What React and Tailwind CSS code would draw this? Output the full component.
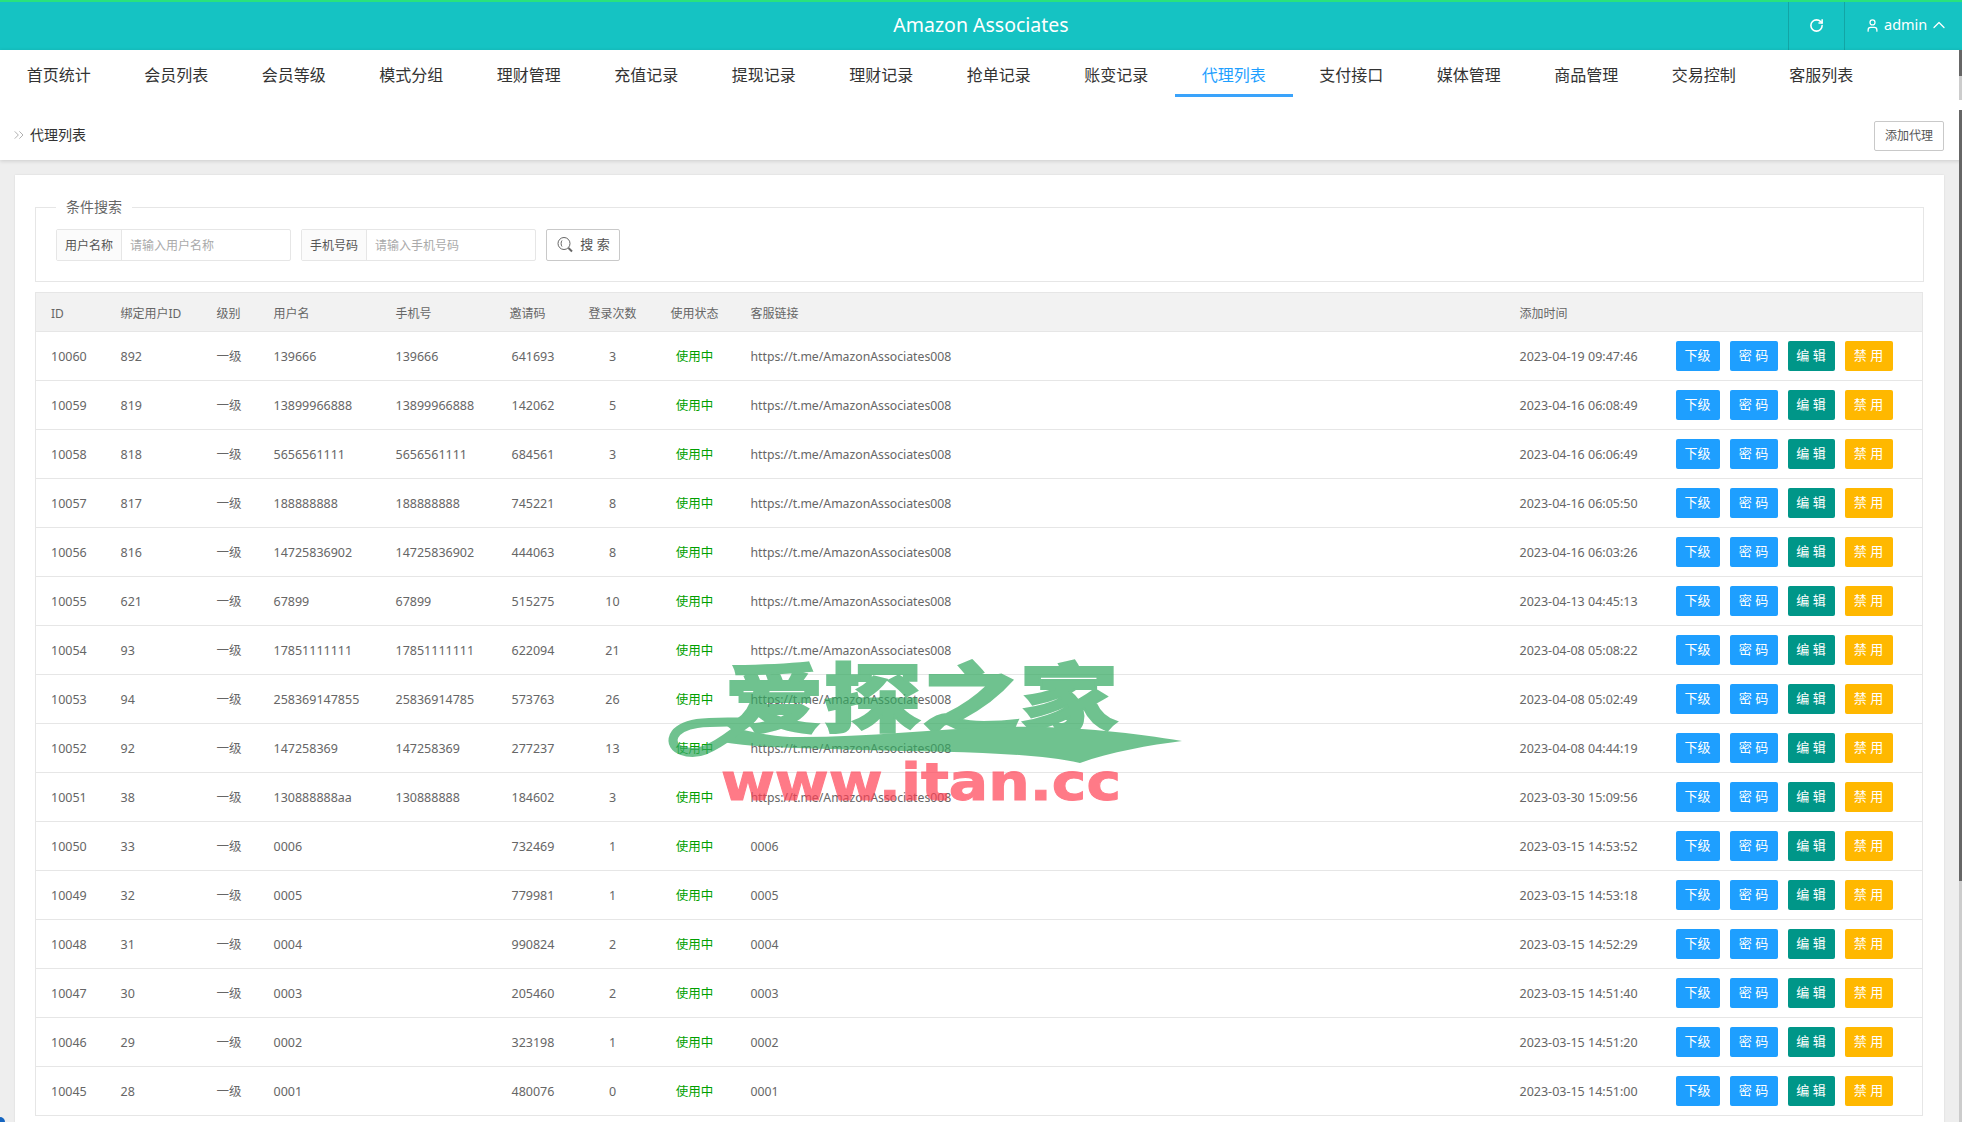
import { RotateCw, User, ChevronUp, ChevronsRight } from 'lucide-react'

const navItems = ['首页统计', '会员列表', '会员等级', '模式分组', '理财管理', '充值记录', '提现记录', '理财记录', '抢单记录', '账变记录', '代理列表', '支付接口', '媒体管理', '商品管理', '交易控制', '客服列表']

const link = 'https://t.me/AmazonAssociates008'

const rows = [
  ['10060', '892', '139666', '139666', '641693', '3', link, '2023-04-19 09:47:46'],
  ['10059', '819', '13899966888', '13899966888', '142062', '5', link, '2023-04-16 06:08:49'],
  ['10058', '818', '5656561111', '5656561111', '684561', '3', link, '2023-04-16 06:06:49'],
  ['10057', '817', '188888888', '188888888', '745221', '8', link, '2023-04-16 06:05:50'],
  ['10056', '816', '14725836902', '14725836902', '444063', '8', link, '2023-04-16 06:03:26'],
  ['10055', '621', '67899', '67899', '515275', '10', link, '2023-04-13 04:45:13'],
  ['10054', '93', '17851111111', '17851111111', '622094', '21', link, '2023-04-08 05:08:22'],
  ['10053', '94', '258369147855', '25836914785', '573763', '26', link, '2023-04-08 05:02:49'],
  ['10052', '92', '147258369', '147258369', '277237', '13', link, '2023-04-08 04:44:19'],
  ['10051', '38', '130888888aa', '130888888', '184602', '3', link, '2023-03-30 15:09:56'],
  ['10050', '33', '0006', '', '732469', '1', '0006', '2023-03-15 14:53:52'],
  ['10049', '32', '0005', '', '779981', '1', '0005', '2023-03-15 14:53:18'],
  ['10048', '31', '0004', '', '990824', '2', '0004', '2023-03-15 14:52:29'],
  ['10047', '30', '0003', '', '205460', '2', '0003', '2023-03-15 14:51:40'],
  ['10046', '29', '0002', '', '323198', '1', '0002', '2023-03-15 14:51:20'],
  ['10045', '28', '0001', '', '480076', '0', '0001', '2023-03-15 14:51:00'],
]

function Watermark() {
  return (
    <svg className="absolute left-[660px] top-[650px] pointer-events-none" width="530" height="160" viewBox="660 650 530 160">
      <g fill="#33a960" stroke="#33a960" opacity="0.7">
        <text transform="translate(725 726) scale(1 0.76)" x="0" y="0" fontSize="98" fontWeight="900" strokeWidth="2.5" fontFamily="'Noto Sans CJK SC', sans-serif" textLength="393" lengthAdjust="spacingAndGlyphs">爱探之家</text>
        <path strokeWidth="0" d="M1182 741 C1130 732 1060 725 1007 727 C930 729 860 738 790 737 C765 736 745 730 735 728 L722 742 C760 748 800 748 860 750 C950 752 1030 752 1080 763 C1110 752 1150 745 1182 741 Z" />
        <path fill="none" strokeWidth="9" d="M740 722 C715 722 682 720 674 736 C668 750 690 756 705 750 C720 744 730 735 740 728" />
      </g>
      <text x="721" y="800" fill="#ff4255" opacity="0.7" fontSize="52" fontWeight="900" fontFamily="'DejaVu Sans', sans-serif" textLength="400" lengthAdjust="spacingAndGlyphs" stroke="#ff4255" strokeWidth="1">www.itan.cc</text>
    </svg>
  )
}

function SearchInput({ label, placeholder }) {
  return (
    <div className="flex h-[32px] w-[235px] border border-[#e6e6e6] rounded-[2px]">
      <div className="w-[65px] pt-[1px] bg-[#fbfbfb] border-r border-[#e6e6e6] flex items-center justify-center text-[12px] text-[#555]">{label}</div>
      <div className="flex-1 pt-[2px] flex items-center pl-[8px] text-[12px] text-[#aaa]">{placeholder}</div>
    </div>
  )
}

export default function App() {
  return (
    <div className="relative h-[1122px] overflow-hidden bg-[#eeeeee] text-[#666] font-['Noto_Sans','Noto_Sans_CJK_SC',sans-serif] text-[13px]">
      <header className="relative h-[50px] bg-[#15c3c3] border-t-2 border-[#2ae27c] flex items-center justify-center text-white">
        <span className="text-[19.5px] -mt-[2px]">Amazon Associates</span>
        <div className="absolute right-0 top-0 h-full flex">
          <div className="w-[57px] border-x border-[#12a5a5] flex items-center justify-center pb-[2px]">
            <RotateCw size={15} strokeWidth={2.5} />
          </div>
          <div className="w-[117px] flex items-center pl-[20px] pb-[2px] text-[14.5px]">
            <User size={15} className="shrink-0" />
            <span className="ml-[4px]">admin</span>
            <ChevronUp size={20} strokeWidth={1.5} className="ml-[2px] shrink-0" />
          </div>
        </div>
      </header>

      <nav className="h-[110px] bg-white shadow-[0_1px_4px_rgba(0,0,0,0.15)] relative">
        <div className="flex h-[47px]">
          {navItems.map((item, i) => (
            <div
              key={item}
              className={
                'w-[117.5px] flex items-center justify-center pt-[6px] text-[16px] border-b-[3px] ' +
                (i === 10 ? 'text-[#1e9fff] border-[#3aa3fb]' : 'text-[#333] border-transparent')
              }
            >
              {item}
            </div>
          ))}
        </div>
        <div className="flex items-start justify-between pl-[11px] pr-[18px] pt-[24px]">
          <div className="flex items-center gap-[3px] pt-[3px] text-[14px] text-[#333]">
            <ChevronsRight size={16} strokeWidth={1} className="text-[#888]" />
            <span>代理列表</span>
          </div>
          <button className="h-[30px] w-[70px] border border-[#c9c9c9] rounded-[2px] bg-white text-[12px] text-[#555]">添加代理</button>
        </div>
      </nav>

      <main className="mt-[15px] ml-[15px] mr-[18px] bg-white shadow-[0_0_2px_rgba(0,0,0,0.1)] px-[20px] pt-[25px] h-[1000px]">
        <fieldset className="h-[82px] border border-[#e6e6e6] px-[20px]">
          <legend className="px-[10px] text-[14px] text-[#666] leading-[14px]">条件搜索</legend>
          <div className="flex gap-[10px] mt-[15px]">
            <SearchInput label="用户名称" placeholder="请输入用户名称" />
            <SearchInput label="手机号码" placeholder="请输入手机号码" />
            <button className="h-[32px] w-[74px] border border-[#c9c9c9] rounded-[2px] flex items-center justify-center gap-[6px] text-[13px] text-[#555]">
              <svg width="18" height="18" viewBox="0 0 18 18" fill="none" stroke="#666" strokeWidth="1">
                <circle cx="8" cy="7.5" r="6" />
                <path d="M6 4.5 C4.8 6 4.8 9 6 10.5" />
                <path d="M12.5 12 L16 15.5" strokeWidth="2" />
              </svg>
              <span>搜 索</span>
            </button>
          </div>
        </fieldset>

        <table className="mt-[10px] w-[1888px] table-fixed border border-[#e6e6e6] border-collapse text-[12.5px]">
          <colgroup>
            <col className="w-[85px]" /><col className="w-[96px]" /><col className="w-[57px]" /><col className="w-[122px]" /><col className="w-[114px]" /><col className="w-[63px]" /><col className="w-[80px]" /><col className="w-[84px]" /><col className="w-[783px]" /><col className="w-[156px]" /><col />
          </colgroup>
          <thead>
            <tr className="h-[39px] bg-[#f2f2f2] text-[12px] text-left border-b border-[#e6e6e6] [&>th]:pt-[3px]">
              <th className="pl-[15px] font-normal">ID</th>
              <th className="font-normal">绑定用户ID</th>
              <th className="font-normal">级别</th>
              <th className="font-normal">用户名</th>
              <th className="font-normal">手机号</th>
              <th className="font-normal">邀请码</th>
              <th className="text-center font-normal">登录次数</th>
              <th className="text-center font-normal">使用状态</th>
              <th className="pl-[14px] font-normal">客服链接</th>
              <th className="font-normal">添加时间</th>
              <th />
            </tr>
          </thead>
          <tbody>
            {rows.map((r) => (
              <tr key={r[0]} className="h-[49px] border-b border-[#e6e6e6] [&>td]:pt-[2px]">
                <td className="pl-[15px]">{r[0]}</td>
                <td>{r[1]}</td>
                <td>一级</td>
                <td>{r[2]}</td>
                <td>{r[3]}</td>
                <td className="pl-[2px]">{r[4]}</td>
                <td className="text-center">{r[5]}</td>
                <td className="text-center text-[#009f00]">使用中</td>
                <td className="pl-[14px] text-[12.25px]">{r[6]}</td>
                <td>{r[7]}</td>
                <td className="!pt-0">
                  <div className="flex gap-[10px] text-white text-[13px]">
                    <span className="h-[30px] w-[44px] rounded-[2px] bg-[#1e9fff] flex items-center justify-center">下级</span>
                    <span className="h-[30px] w-[48px] rounded-[2px] bg-[#1e9fff] flex items-center justify-center">密 码</span>
                    <span className="h-[30px] w-[47px] rounded-[2px] bg-[#009688] flex items-center justify-center">编 辑</span>
                    <span className="h-[30px] w-[48px] rounded-[2px] bg-[#ffb800] flex items-center justify-center">禁 用</span>
                  </div>
                </td>
              </tr>
            ))}
          </tbody>
        </table>
      </main>

      <Watermark />
      <div className="absolute left-0 bottom-0 w-[5px] h-[5px] rounded-tr-[5px] bg-[#1565c0]" />
      {/* window edge strip on the right */}
      <div className="absolute right-0 top-[50px] w-[3px] h-[26px] bg-[#666]" />
      <div className="absolute right-0 top-[76px] w-[3px] h-[24px] bg-[#ccc]" />
      <div className="absolute right-0 top-[110px] w-[3px] h-[771px] bg-[#666]" />
      <div className="absolute right-0 top-[881px] w-[3px] h-[241px] bg-[#ccc]" />
    </div>
  )
}
